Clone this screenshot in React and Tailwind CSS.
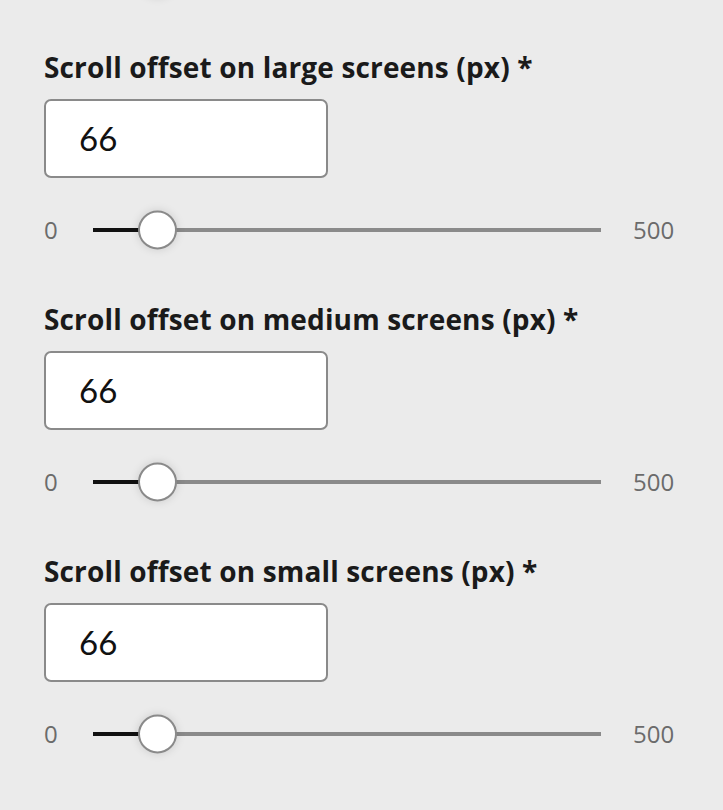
import React from "react";

function Thumb() {
  return (
    <div className="absolute left-[45px] top-1/2 -translate-y-1/2 w-[39px] h-[39px] rounded-full bg-white border-2 border-[#8a8a8a] shadow-[0_0_10px_rgba(0,0,0,0.13)]" />
  );
}

function SliderRow({ max = 500 }) {
  return (
    <div className="flex items-center h-[40px]">
      <span className="w-[49px] text-[24px] text-[#6b6b6b] font-['Open_Sans',sans-serif] leading-none">0</span>
      <div className="relative w-[508px] h-[40px] flex items-center">
        <div className="w-full h-[4px] bg-[#8a8a8a]" />
        <div className="absolute left-0 top-1/2 -translate-y-1/2 h-[4px] w-[64px] bg-[#111111]" />
        <Thumb />
      </div>
      <span className="ml-[32px] text-[24px] text-[#6b6b6b] font-['Open_Sans',sans-serif] leading-none">{max}</span>
    </div>
  );
}

function Section({ label }) {
  return (
    <div className="flex flex-col">
      <div className="mt-[53px] text-[28px] leading-[32px] font-bold tracking-[0.15px] text-[#1a1a1a] font-['Open_Sans',sans-serif] whitespace-nowrap">{label}</div>
      <div className="mt-[16px] w-[284px] h-[79px] rounded-[7px] border-2 border-[#8a8a8a] bg-white flex items-center pl-[33px]">
        <span className="text-[33px] text-[#111] font-['Lato',sans-serif] leading-none">66</span>
      </div>
      <div className="mt-[32px]">
        <SliderRow />
      </div>
    </div>
  );
}

export default function App() {
  return (
    <div className="w-[723px] h-[810px] overflow-hidden bg-[#ebebeb] pl-[44px]">
      <div className="-mt-[42px] h-[40px] relative w-[557px]">
        <div className="absolute left-[49px] top-0 w-[508px] h-[40px]">
          <Thumb />
        </div>
      </div>
      <Section label="Scroll offset on large screens (px) *" />
      <Section label="Scroll offset on medium screens (px) *" />
      <Section label="Scroll offset on small screens (px) *" />
    </div>
  );
}
